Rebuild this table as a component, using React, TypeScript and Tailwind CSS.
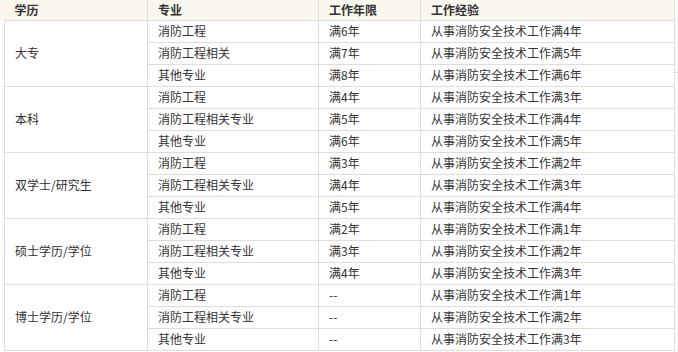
const groups = [
  {
    degree: '大专',
    rows: [
      ['消防工程', '满6年', '从事消防安全技术工作满4年'],
      ['消防工程相关', '满7年', '从事消防安全技术工作满5年'],
      ['其他专业', '满8年', '从事消防安全技术工作满6年'],
    ],
  },
  {
    degree: '本科',
    rows: [
      ['消防工程', '满4年', '从事消防安全技术工作满3年'],
      ['消防工程相关专业', '满5年', '从事消防安全技术工作满4年'],
      ['其他专业', '满6年', '从事消防安全技术工作满5年'],
    ],
  },
  {
    degree: '双学士/研究生',
    rows: [
      ['消防工程', '满3年', '从事消防安全技术工作满2年'],
      ['消防工程相关专业', '满4年', '从事消防安全技术工作满3年'],
      ['其他专业', '满5年', '从事消防安全技术工作满4年'],
    ],
  },
  {
    degree: '硕士学历/学位',
    rows: [
      ['消防工程', '满2年', '从事消防安全技术工作满1年'],
      ['消防工程相关专业', '满3年', '从事消防安全技术工作满2年'],
      ['其他专业', '满4年', '从事消防安全技术工作满3年'],
    ],
  },
  {
    degree: '博士学历/学位',
    rows: [
      ['消防工程', '--', '从事消防安全技术工作满1年'],
      ['消防工程相关专业', '--', '从事消防安全技术工作满2年'],
      ['其他专业', '--', '从事消防安全技术工作满3年'],
    ],
  },
];

const cell = 'border border-[#dddddd] px-[10px] py-0 text-left align-middle';

export default function App() {
  return (
    <div
      className="relative w-[678px] h-[352px] bg-white text-[12px] leading-[18px] text-[#333333] overflow-hidden"
      style={{ fontFamily: '"Noto Sans CJK SC", "Noto Sans", sans-serif' }}
    >
      <div className="absolute left-0 top-0 w-[5px] h-[20px] bg-[#faf7ef]" />
      <table className="ml-[4px] w-[670px] border-collapse table-fixed">
        <colgroup>
          <col className="w-[143px]" />
          <col className="w-[171px]" />
          <col className="w-[102px]" />
          <col className="w-[254px]" />
        </colgroup>
        <thead>
          <tr className="bg-[#faf7ef] h-[20px]">
            <th className={`${cell} border-t-0 border-l-0 font-bold`}>学历</th>
            <th className={`${cell} border-t-0 font-bold`}>专业</th>
            <th className={`${cell} border-t-0 font-bold`}>工作年限</th>
            <th className={`${cell} border-t-0 font-bold`}>工作经验</th>
          </tr>
        </thead>
        <tbody>
          {groups.map((g) =>
            g.rows.map((r, i) => (
              <tr key={g.degree + i} className="h-[22px]">
                {i === 0 && (
                  <td rowSpan={3} className={cell}>
                    {g.degree}
                  </td>
                )}
                <td className={cell}>{r[0]}</td>
                <td className={cell}>{r[1]}</td>
                <td className={cell}>{r[2]}</td>
              </tr>
            ))
          )}
        </tbody>
      </table>
      <div className="absolute left-[674px] top-0 w-[4px] h-[73px] border-l border-b border-[#dddddd]" />
    </div>
  );
}
